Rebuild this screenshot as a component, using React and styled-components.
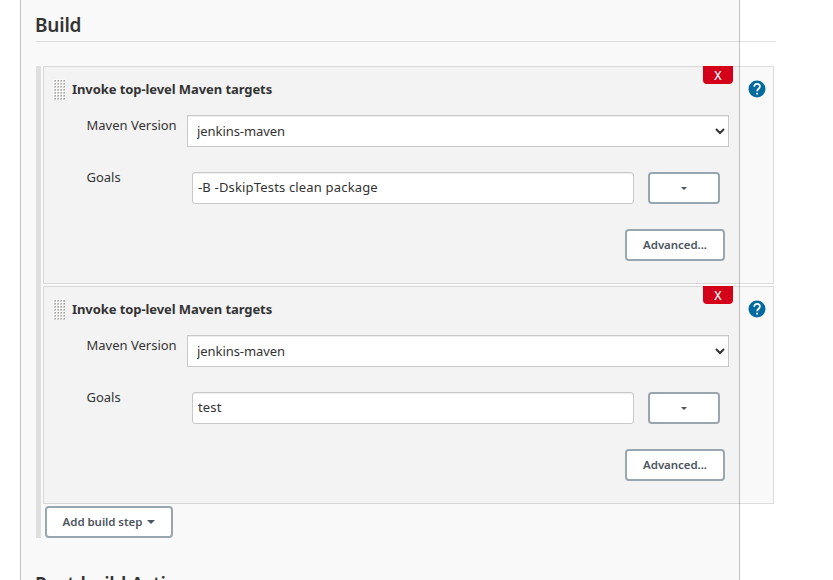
import React from "react";
import styled, { createGlobalStyle } from "styled-components";

const GlobalStyle = createGlobalStyle`
  *, *::before, *::after { box-sizing: border-box; }
  body {
    margin: 0;
    background: #fff;
    color: #333;
    font-family: "Noto Sans", sans-serif;
    font-size: 13px;
    overflow: hidden;
  }
  button, input, select { font-family: inherit; margin: 0; }
`;

const Panel = styled.main`
  width: 720px;
  height: 580px;
  margin-left: 20px;
  padding: 10px 0 0 15px;
  background: #f9f9f9;
  border: solid #c4c4c4;
  border-width: 0 1px;
`;

const SectionTitle = styled.h2`
  width: 740px;
  height: 32px;
  margin: 0;
  border-bottom: 1px solid ${(p) => (p.$plain ? "transparent" : "rgba(0, 0, 0, 0.11)")};
  font-size: 19px;
  font-weight: 600;
  line-height: 30px;
  letter-spacing: -0.2px;
  text-indent: -1px;
`;

const Steps = styled.section`
  width: 738px;
  margin: 24px 0 31px;
  padding-left: 2px;
  border-left: 5px solid #dfdfdf;
`;

const Card = styled.article`
  position: relative;
  width: 731px;
  height: 218px;
  margin-bottom: 2px;
  padding: 12px 0 0 9px;
  background: rgba(0, 0, 0, 0.025);
  border: 1px solid rgba(0, 0, 0, 0.11);
`;

const CardHeader = styled.header`
  display: flex;
  height: 36px;
`;

const Grip = styled.svg`
  width: 12px;
  height: 21px;
  margin-right: 7px;
`;

const StepTitle = styled.h3`
  width: 676px;
  margin: 0;
  font-size: 13px;
  font-weight: 700;
  line-height: 20px;
  letter-spacing: -0.08px;
`;

const Help = styled.svg`
  width: 18px;
  height: 18px;
  margin-top: 1px;
`;

const DeleteButton = styled.button`
  position: absolute;
  top: -1px;
  right: 40px;
  width: 30px;
  height: 18px;
  padding: 0;
  border: 0;
  border-radius: 0 0 4px 4px;
  background: #d4001a;
  color: #fff;
  font-size: 12px;
  font-weight: 500;
  line-height: 17px;
`;

const Field = styled.div`
  display: flex;
  height: ${(p) => p.$height}px;
  padding-left: 33px;
`;

const Label = styled.label`
  width: ${(p) => p.$width}px;
  flex: none;
  line-height: 20px;
  text-indent: 0.5px;
  white-space: nowrap;
`;

const Select = styled.select`
  width: 542px;
  height: 32px;
  padding: 0 0 0 5px;
  background: #fff;
  border: 1px solid #c8c8c8;
  border-radius: 0;
  box-shadow: inset 0 1px 1px rgba(0, 0, 0, 0.075);
  color: #333;
  font-size: 13px;
  letter-spacing: -0.07px;
`;

const Input = styled.input`
  width: 442px;
  height: 32px;
  margin-right: 14px;
  padding: 0 5px 2px;
  background: #fff;
  border: 1px solid #c8c8c8;
  border-radius: 3px;
  box-shadow: inset 0 1px 1px rgba(0, 0, 0, 0.075);
  color: #333;
  font-size: 13px;
  letter-spacing: 0.17px;
`;

const Button = styled.button`
  display: flex;
  align-items: center;
  justify-content: center;
  width: ${(p) => p.$width}px;
  height: 32px;
  padding: 0 0 1px;
  gap: 5px;
  background: #fff;
  border: 2px solid #98a6b0;
  border-radius: 4px;
  color: #4d545d;
  font-size: 11.5px;
  font-weight: 600;
  letter-spacing: -0.06px;
  white-space: nowrap;
`;

const Actions = styled.div`
  padding-left: 572px;
`;

const AddRow = styled.div`
  height: 32px;
  padding-left: 2px;
`;

const Caret = styled.i`
  margin-top: ${(p) => p.$drop || 0}px;
  border: solid transparent;
  border-width: ${(p) => p.$size}px ${(p) => p.$size}px 0;
  border-top-color: #4d545d;
`;

function GripIcon() {
  const dots = [];
  for (let y = 0; y < 7; y++) {
    for (let x = 0; x < 4; x++) dots.push([x * 3, y * 3]);
  }
  return (
    <Grip viewBox="0 0 12 21" shapeRendering="crispEdges">
      <rect width="12" height="21" fill="#fafafa" />
      {dots.map(([x, y]) => (
        <g key={`${x}-${y}`}>
          <rect x={x + 1} y={y + 1} width="2" height="2" fill="#cfcdc9" />
          <rect x={x + 2} y={y + 1} width="1" height="1" fill="#a5a39f" />
        </g>
      ))}
    </Grip>
  );
}

function HelpIcon() {
  return (
    <Help viewBox="0 0 24 24" role="img" aria-label="Help">
      <circle cx="12" cy="12" r="11.3" fill="#006b9f" />
      <path
        d="M8.3 9.1c0-2.3 1.5-3.9 3.8-3.9s3.8 1.5 3.8 3.6c0 2.8-3.7 3-3.7 6.2"
        fill="none"
        stroke="#fff"
        strokeWidth="2.3"
      />
      <rect x="11" y="17" width="2.4" height="2.4" fill="#fff" />
    </Help>
  );
}

const GoalsText = styled.span`
  display: block;
  margin-top: -5px;
`;

function BuildStep({ id, goals }) {
  return (
    <Card>
      <DeleteButton>X</DeleteButton>
      <CardHeader>
        <GripIcon />
        <StepTitle>Invoke top-level Maven targets</StepTitle>
        <HelpIcon />
      </CardHeader>
      <Field $height={57}>
        <Label $width={101} htmlFor={`version-${id}`}>Maven Version</Label>
        <Select id={`version-${id}`} defaultValue="jenkins-maven">
          <option>jenkins-maven</option>
        </Select>
      </Field>
      <Field $height={57}>
        <Label $width={106} htmlFor={`goals-${id}`}>
          <GoalsText>Goals</GoalsText>
        </Label>
        <Input id={`goals-${id}`} defaultValue={goals} />
        <Button $width={72} aria-label="Expand"><Caret $size={3.5} $drop={2} /></Button>
      </Field>
      <Actions>
        <Button $width={100}>Advanced...</Button>
      </Actions>
    </Card>
  );
}

export default function App() {
  return (
    <>
      <GlobalStyle />
      <Panel>
        <SectionTitle>Build</SectionTitle>
        <Steps>
          <BuildStep id="package" goals="-B -DskipTests clean package" />
          <BuildStep id="test" goals="test" />
          <AddRow>
            <Button $width={128}>Add build step <Caret $size={4} /></Button>
          </AddRow>
        </Steps>
        <SectionTitle $plain>Post-build Actions</SectionTitle>
      </Panel>
    </>
  );
}
